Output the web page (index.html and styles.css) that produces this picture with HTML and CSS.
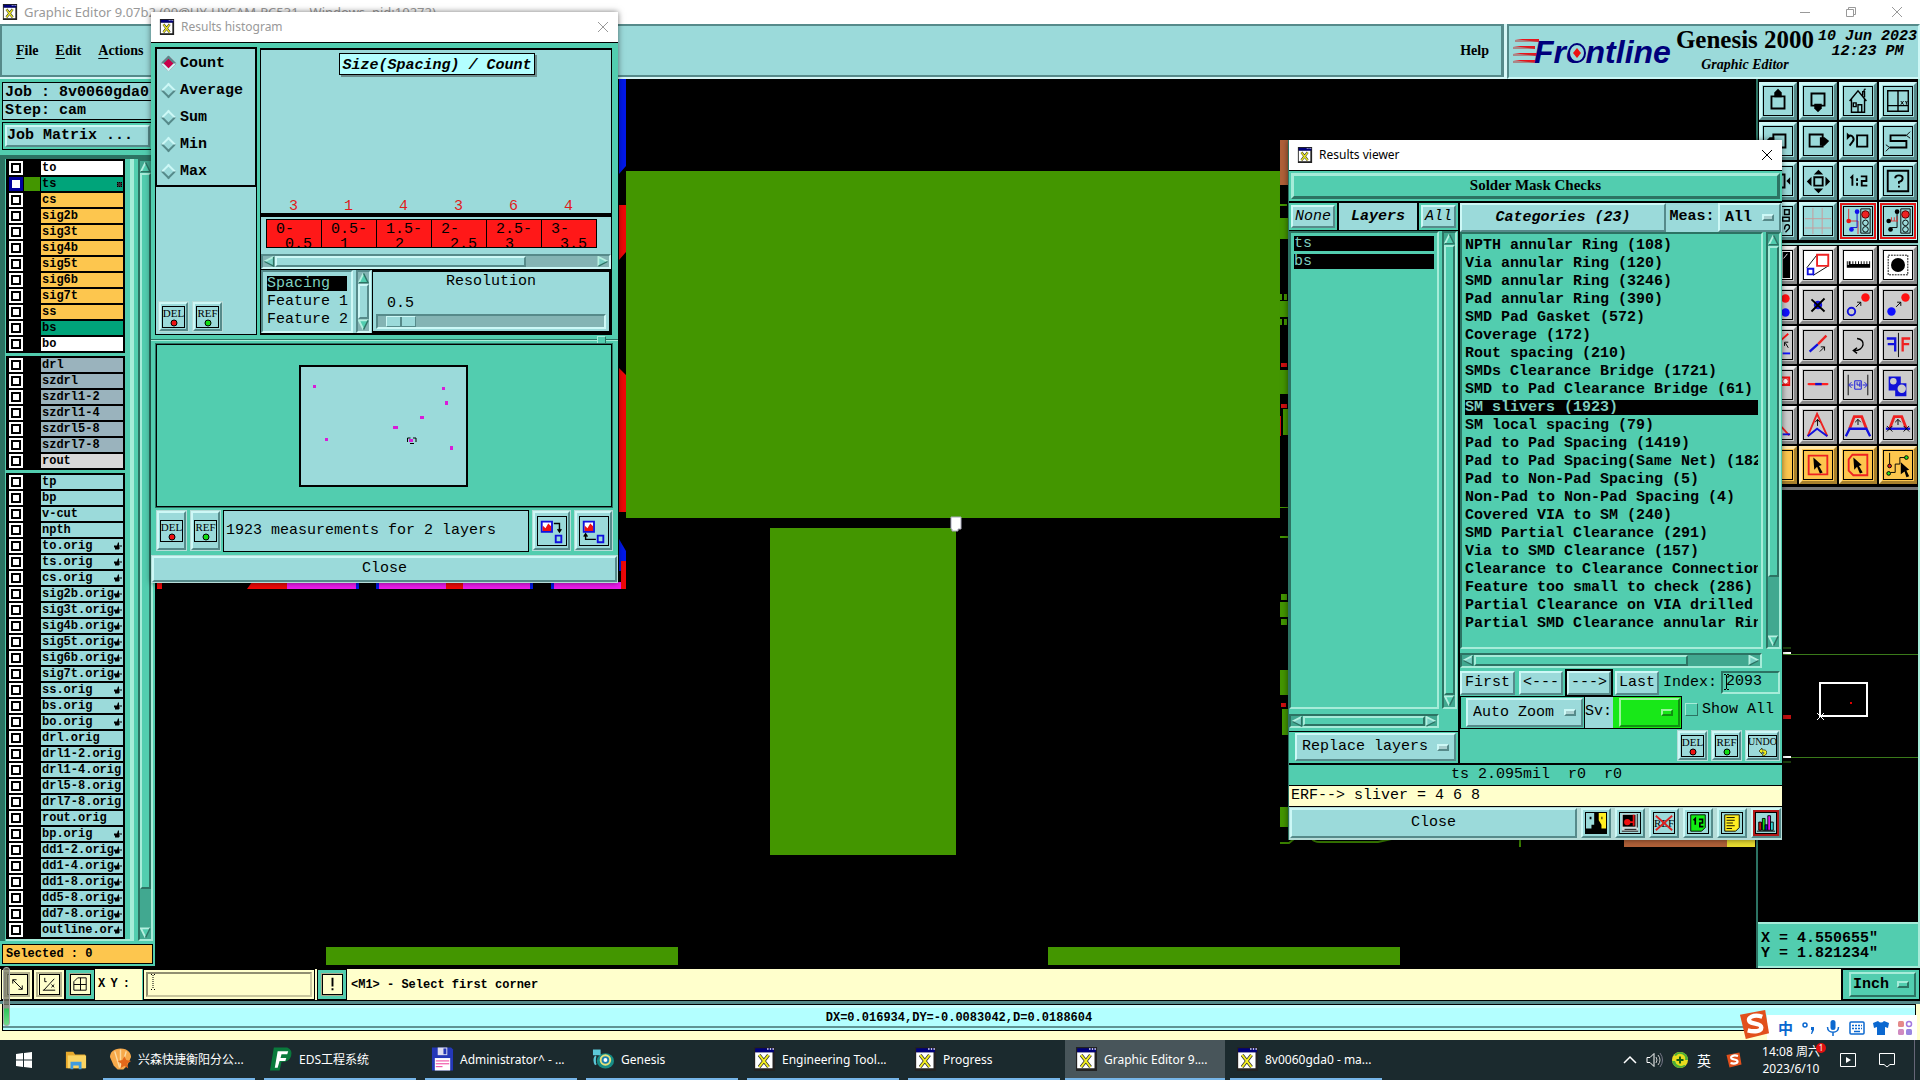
FILE: index.html
```html
<!DOCTYPE html>
<html lang="en">
<head>
<meta charset="utf-8">
<title>Graphic Editor 9.07b2</title>
<link rel="stylesheet" href="styles.css">
</head>
<body>
<svg class="defs" aria-hidden="true">
  <symbol id="xapp" viewBox="0 0 16 18"><path d="M0 0h16v18H0z" fill="#222"/><path d="M1 4h13v12H1z" fill="#fff"/><path d="M1 1h14v3H1z" fill="#00007b"/><path d="M10 1h1v1h-1zM12 1h1v1h-1zM14 1h1v1h-1z" fill="#fff"/><path d="M4 6l7 9M11 6l-7 9" stroke="#333" stroke-width="2.6"/><path d="M4 6l7 9M11 6l-7 9" stroke="#f3ee20" stroke-width="1.5"/></symbol>
  <symbol id="hand" viewBox="0 0 8 8"><path d="M0 3h3l1-3h1v3h3v1H5v1h1v1H5v1H1V5H0z"/></symbol>
  <symbol id="dot-red" viewBox="0 0 8 8"><circle cx="4" cy="4" r="3" fill="#e11" stroke="#000"/></symbol>
  <symbol id="dot-green" viewBox="0 0 8 8"><circle cx="4" cy="4" r="3" fill="#1d1" stroke="#000"/></symbol>
  <symbol id="up" viewBox="0 0 12 12"><path d="M6 1L1 11h10z" fill="#52cdaf"/><path d="M6 1L1 11" stroke="#b5f0e0" stroke-width="2"/><path d="M6 1l5 10H1" fill="none" stroke="#2c7363" stroke-width="1.5"/></symbol>
  <symbol id="down" viewBox="0 0 12 12"><path d="M6 11L1 1h10z" fill="#52cdaf"/><path d="M6 11L1 1h10" fill="none" stroke="#b5f0e0" stroke-width="2"/><path d="M11 1L6 11" stroke="#2c7363" stroke-width="1.5"/></symbol>
  <symbol id="left" viewBox="0 0 12 12"><path d="M1 6l10-5v10z" fill="#79cfc4"/><path d="M1 6l10-5" stroke="#b5f0e0" stroke-width="2"/><path d="M11 1v10L1 6" fill="none" stroke="#2c7363" stroke-width="1.5"/></symbol>
  <symbol id="right" viewBox="0 0 12 12"><path d="M11 6L1 1v10z" fill="#79cfc4"/><path d="M11 6L1 1v10" fill="none" stroke="#b5f0e0" stroke-width="2"/><path d="M11 6L1 11" stroke="#2c7363" stroke-width="1.5"/></symbol>
  <symbol id="sogou" viewBox="0 0 32 32"><path d="M1 6L27 1l4 24L7 31z" fill="#e2501c"/><path d="M24 8C15 5 8 9 11 13c3 3 12 1 12 6 0 4-7 5-14 3" fill="none" stroke="#fff" stroke-width="4.5"/></symbol>
</svg>

<header class="titlebar">
  <svg class="app-icon"><use href="#xapp"/></svg>
  <span>Graphic Editor 9.07b2 (00@HY-HYCAM-PC531 - Windows, pid:10272)</span>
  <div class="win-controls">
    <button aria-label="Minimize"><svg viewBox="0 0 12 12"><path d="M1 6.5h10"/></svg></button>
    <button aria-label="Restore"><svg viewBox="0 0 12 12"><path d="M1.500 3.500h7v7h-7zM3.500 3.500v-2h7v7h-2"/></svg></button>
    <button aria-label="Close window"><svg viewBox="0 0 12 12"><path d="M1 1l10 10M11 1L1 11"/></svg></button>
  </div>
</header>

<div class="top">
  <nav class="menu">
    <button><u>F</u>ile</button><button><u>E</u>dit</button><button><u>A</u>ctions</button><button class="help">Help</button>
  </nav>
  <div class="brand">
    <svg class="logo" viewBox="0 0 164 34"><path d="M2 4h24v3zM0 11h22v3zM0 18h24v3zM0 25h24v3z" fill="#e8141c"/><path d="M2 6h24M0 13h22M0 20h24M0 27h24" stroke="#b33"/><text x="21" y="28">Frontline</text><ellipse cx="64" cy="18" rx="8" ry="9" fill="#9bdada" stroke="#00007b" stroke-width="2"/><path d="M64 13l4 5-4 5-4-5z" fill="#e11"/></svg>
    <div class="product"><b>Genesis 2000</b><i>Graphic Editor</i></div>
    <div class="date"><span>10 Jun 2023</span><span>12:23 PM</span></div>
  </div>
</div>

<main class="work">
  <aside class="side">
    <div class="job">Job : 8v0060gda0</div>
    <div class="job">Step: cam</div>
    <div class="matrix"><button>Job Matrix ...</button></div>
    <div class="layer-area">
      <div class="layers">
        <ul class="white">
          <li><label><input type="checkbox"><i></i><span>to</span></label></li>
          <li class="sel"><label><input type="checkbox"><i></i><span>ts<em></em></span></label></li>
          <li class="sig"><label><input type="checkbox"><i></i><span>cs</span></label></li>
          <li class="sig"><label><input type="checkbox"><i></i><span>sig2b</span></label></li>
          <li class="sig"><label><input type="checkbox"><i></i><span>sig3t</span></label></li>
          <li class="sig"><label><input type="checkbox"><i></i><span>sig4b</span></label></li>
          <li class="sig"><label><input type="checkbox"><i></i><span>sig5t</span></label></li>
          <li class="sig"><label><input type="checkbox"><i></i><span>sig6b</span></label></li>
          <li class="sig"><label><input type="checkbox"><i></i><span>sig7t</span></label></li>
          <li class="sig"><label><input type="checkbox"><i></i><span>ss</span></label></li>
          <li class="mask"><label><input type="checkbox"><i></i><span>bs</span></label></li>
          <li><label><input type="checkbox"><i></i><span>bo</span></label></li>
        </ul>
        <ul class="drill">
          <li><label><input type="checkbox"><i></i><span>drl</span></label></li>
          <li><label><input type="checkbox"><i></i><span>szdrl</span></label></li>
          <li><label><input type="checkbox"><i></i><span>szdrl1-2</span></label></li>
          <li><label><input type="checkbox"><i></i><span>szdrl1-4</span></label></li>
          <li><label><input type="checkbox"><i></i><span>szdrl5-8</span></label></li>
          <li><label><input type="checkbox"><i></i><span>szdrl7-8</span></label></li>
          <li class="rout"><label><input type="checkbox"><i></i><span>rout</span></label></li>
        </ul>
        <ul class="misc">
          <li><label><input type="checkbox"><i></i><span>tp</span></label></li>
          <li><label><input type="checkbox"><i></i><span>bp</span></label></li>
          <li><label><input type="checkbox"><i></i><span>v-cut</span></label></li>
          <li><label><input type="checkbox"><i></i><span>npth</span></label></li>
          <li><label><input type="checkbox"><i></i><span>to.orig<svg><use href="#hand"/></svg></span></label></li>
          <li><label><input type="checkbox"><i></i><span>ts.orig<svg><use href="#hand"/></svg></span></label></li>
          <li><label><input type="checkbox"><i></i><span>cs.orig<svg><use href="#hand"/></svg></span></label></li>
          <li><label><input type="checkbox"><i></i><span>sig2b.orig<svg><use href="#hand"/></svg></span></label></li>
          <li><label><input type="checkbox"><i></i><span>sig3t.orig<svg><use href="#hand"/></svg></span></label></li>
          <li><label><input type="checkbox"><i></i><span>sig4b.orig<svg><use href="#hand"/></svg></span></label></li>
          <li><label><input type="checkbox"><i></i><span>sig5t.orig<svg><use href="#hand"/></svg></span></label></li>
          <li><label><input type="checkbox"><i></i><span>sig6b.orig<svg><use href="#hand"/></svg></span></label></li>
          <li><label><input type="checkbox"><i></i><span>sig7t.orig<svg><use href="#hand"/></svg></span></label></li>
          <li><label><input type="checkbox"><i></i><span>ss.orig<svg><use href="#hand"/></svg></span></label></li>
          <li><label><input type="checkbox"><i></i><span>bs.orig<svg><use href="#hand"/></svg></span></label></li>
          <li><label><input type="checkbox"><i></i><span>bo.orig<svg><use href="#hand"/></svg></span></label></li>
          <li><label><input type="checkbox"><i></i><span>drl.orig</span></label></li>
          <li><label><input type="checkbox"><i></i><span>drl1-2.orig</span></label></li>
          <li><label><input type="checkbox"><i></i><span>drl1-4.orig</span></label></li>
          <li><label><input type="checkbox"><i></i><span>drl5-8.orig</span></label></li>
          <li><label><input type="checkbox"><i></i><span>drl7-8.orig</span></label></li>
          <li><label><input type="checkbox"><i></i><span>rout.orig</span></label></li>
          <li><label><input type="checkbox"><i></i><span>bp.orig<svg><use href="#hand"/></svg></span></label></li>
          <li><label><input type="checkbox"><i></i><span>dd1-2.orig<svg><use href="#hand"/></svg></span></label></li>
          <li><label><input type="checkbox"><i></i><span>dd1-4.orig<svg><use href="#hand"/></svg></span></label></li>
          <li><label><input type="checkbox"><i></i><span>dd1-8.orig<svg><use href="#hand"/></svg></span></label></li>
          <li><label><input type="checkbox"><i></i><span>dd5-8.orig<svg><use href="#hand"/></svg></span></label></li>
          <li><label><input type="checkbox"><i></i><span>dd7-8.orig<svg><use href="#hand"/></svg></span></label></li>
          <li><label><input type="checkbox"><i></i><span>outline.or<svg><use href="#hand"/></svg></span></label></li>
        </ul>
      </div>
      <div class="vscroll"><svg><use href="#up"/></svg><div class="track"><div class="thumb" style="height:95%"></div></div><svg><use href="#down"/></svg></div>
    </div>
    <div class="selected">Selected : 0</div>
  </aside>

  <svg class="board" viewBox="155 79 1601 889" preserveAspectRatio="xMinYMin slice">
    <g fill="#439600">
      <path d="M626 171h654v347H626zM770 528h186v327H770zM326 947h352v18H326zM1048 947h352v18h-352z"/>
      <path d="M1280 204h7v2h-7zM1280 218h8v21h-8zM1280 294h2v6h-2zM1284 294h3v6h-3zM1280 301h8v16h-8zM1280 319h2v6h-2zM1284 319h3v6h-3zM1280 370h8v24h-8zM1283 409h5v26h-5zM1280 507h8v1h-8zM1280 536h8v2h-8zM1281 594h6v6h-6zM1280 602h8v15h-8zM1281 619h6v6h-6zM1280 670h8v25h-8zM1282 709h6v26h-6zM1280 807h8v20h-8z"/>
    </g>
    <path d="M1280 843h9l5-4M1312 839q2 3 8 3h58l18-4M1520 838v9" fill="none" stroke="#3a8000" stroke-width="2"/>
    <path d="M1281 363h6v4h-6zM1281 404h6v4h-6zM1280 416h1v20h-1zM1281 703h5v4h-5z" fill="#d01010"/>
    <path d="M1280 140h8v45h-8zM1624 839h103v8h-103z" fill="#b06038"/><path d="M1727 839h28v8h-28z" fill="#e8dc30"/>
    <path d="M619 79h7v87l-7 8zM619 539l7 12v20h-7zM446 582h6v7h-6zM530 582h3v7h-3zM551 582h3v7h-3zM376 582h3v7h-3zM356 582h3v7h-3z" fill="#0018e8"/>
    <path d="M619 205h7v47l-7 8zM619 368l7 7v137h-7zM157 582h5v7h-5zM252 582h35v7h-40zM446 582h17v7h-17zM621 561h5v28h-5z" fill="#f00808"/>
    <path d="M287 582h69v7h-69zM379 582h67v7h-67zM463 582h67v7h-67zM554 582h67v7h-67z" fill="#ee1cee"/>
    <path d="M951 517h10v12h-3v2h-6v-2h-1z" fill="#fff" stroke="#aab"/>
  </svg>

  <aside class="tools">
    <div class="grid">
      <button aria-label="Pan up"><svg viewBox="0 0 30 30"><path d="M8 10h14v13H8z" fill="none" stroke="#000" stroke-width="2"/><path d="M15 2l4 4v5h-8V6z"/></svg></button>
      <button aria-label="Pan down"><svg viewBox="0 0 30 30"><path d="M8 7h14v13H8z" fill="none" stroke="#000" stroke-width="2"/><path d="M11 18h8v5l-4 4-4-4z"/></svg></button>
      <button aria-label="Home"><svg viewBox="0 0 30 30"><path d="M6 15L15 4l9 11M8 13v14h14V13M15 27v-8h4v8M10 17h3v4h-3zM20 9V5h2v6M21 4l2-2" fill="none" stroke="#000" stroke-width="1.500"/></svg></button>
      <button aria-label="Panes"><svg viewBox="0 0 30 30"><path d="M4 4h22v22H4zM15 4v22M4 20h22" fill="none" stroke="#000" stroke-width="1.500"/><path d="M18 15l3 4M21 15l-3 4M23 15l1 2 1-2M24 17v2" fill="none" stroke="#000"/></svg></button>
      <button aria-label="Pan left"><svg viewBox="0 0 30 30"><path d="M10 8h13v14H10z" fill="none" stroke="#000" stroke-width="2"/><path d="M2 15l4-4h5v8H6z"/></svg></button>
      <button aria-label="Pan right"><svg viewBox="0 0 30 30"><path d="M6 8h14v13H6z" fill="none" stroke="#000" stroke-width="2"/><path d="M17 11h5l5 4-5 5h-5z"/></svg></button>
      <button aria-label="Previous view"><svg viewBox="0 0 30 30"><path d="M14 9h11v12H14z" fill="none" stroke="#000" stroke-width="2"/><path d="M4 10c5-3 8 3 5 6l-3 4" fill="none" stroke="#000" stroke-width="2"/><path d="M3 6v8l4-4z"/></svg></button>
      <button aria-label="Serpentine"><svg viewBox="0 0 30 30"><path d="M24 9H7v6h17v7H6" fill="none" stroke="#000" stroke-width="2"/><path d="M28 5l-4 4 4 3M2 19l4 3-4 4" fill="none" stroke="#000"/></svg></button>
      <button aria-label="Zoom in"><svg viewBox="0 0 30 30"><path d="M18 8h4v14h-4" fill="none" stroke="#000" stroke-width="2"/><path d="M24 15l4-4v8z"/></svg></button>
      <button aria-label="Zoom out"><svg viewBox="0 0 30 30"><path d="M11 11h9v9h-9z" fill="none" stroke="#000" stroke-width="2"/><path d="M15.500 3l5 5h-10zM15.500 28l5-5h-10zM3 15.500l5-5v10zM28 15.500l-5-5v10z"/></svg></button>
      <button aria-label="Scale"><svg viewBox="0 0 30 30"><path d="M7 12l2-2v10M14 12v3M14 17v3M18 10h6v5h-5v5h6" fill="none" stroke="#000" stroke-width="2"/></svg></button>
      <button aria-label="Query"><svg viewBox="0 0 30 30"><path d="M4 4h22v22H4z" fill="none" stroke="#000" stroke-width="2"/><path d="M12 12q0-3 4-3t4 3q0 3-4 4v2M16 20v2" fill="none" stroke="#000" stroke-width="2"/></svg></button>
      <button aria-label="Options"><svg viewBox="0 0 30 30"><path d="M22 3h5v5h-5zM20 11h7v4h-7zM22 24q0-5 3-5t2 4l-4 4" fill="none" stroke="#000" stroke-width="1.500"/></svg></button>
      <button aria-label="Grid"><svg viewBox="0 0 30 30"><path d="M9.500 1v28M19.500 1v28M1 12.500h28M1 22.500h28" stroke="#c89a9a"/></svg></button>
      <button class="hot" aria-label="Selection on"><svg viewBox="0 0 30 30"><path d="M5 2v13h10v14" fill="none" stroke="#d33"/><path d="M14 5v17H8" fill="none" stroke="#11c"/><g fill="#11e"><circle cx="14" cy="5" r="2.500"/><circle cx="8" cy="24" r="2.500"/></g><circle cx="5" cy="15" r="2.500" fill="#e11"/><path d="M18 2h10v26H18z" fill="none" stroke="#000"/><circle cx="23" cy="8" r="4" fill="#e22" stroke="#500"/><circle cx="23" cy="17" r="3" fill="none" stroke="#000"/><circle cx="23" cy="24" r="3" fill="none" stroke="#000"/></svg></button>
      <button class="hot" aria-label="Selection off"><svg viewBox="0 0 30 30"><path d="M14 5v17H8" fill="none" stroke="#000"/><path d="M5 15h10M8 11v4M11 11v4M14 10v5" stroke="#d33" fill="none"/><circle cx="14" cy="5" r="2.500"/><circle cx="7" cy="24" r="2.500"/><circle cx="5" cy="15" r="2.500"/><path d="M18 2h10v26H18z" fill="none" stroke="#000"/><circle cx="23" cy="8" r="4" fill="#e22" stroke="#500"/><circle cx="23" cy="17" r="3" fill="none" stroke="#000"/><circle cx="23" cy="24" r="3" fill="none" stroke="#000"/></svg></button>
    </div>
    <div class="grid edit">
      <button class="w" aria-label="Fill"><svg viewBox="0 0 30 30"><path d="M20 1h8v28h-8z"/><path d="M21 8l4-5" stroke="#fff"/></svg></button>
      <button class="w" aria-label="Resize"><svg viewBox="0 0 30 30"><path d="M3 18L14 4M10 26l16-10" stroke="#000"/><path d="M14 4h12v12H14z" fill="none" stroke="#e22" stroke-width="2"/><path d="M4 19h6v6H4z" fill="none" stroke="#11d" stroke-width="2"/></svg></button>
      <button class="w" aria-label="Measure"><svg viewBox="0 0 30 30"><path d="M3 18v-7h1v4h1v-4h2v3h2v-3h1v3h2v-3h1v3h2v-3h1v3h2v-3h1v3h2v-3h1v3h2v-3h1v3h2v-3h1v7z"/></svg></button>
      <button class="w" aria-label="Aperture"><svg viewBox="0 0 30 30"><circle cx="15" cy="15" r="7.500"/><path d="M4.500 4.500h21v21h-21z" fill="none" stroke="#000" stroke-dasharray="2 1"/></svg></button>
      <button aria-label="Copy"><svg viewBox="0 0 30 30"><circle cx="23" cy="8" r="4.500" fill="#f11"/><circle cx="23" cy="23" r="4.500" fill="#11f"/></svg></button>
      <button aria-label="Delete"><svg viewBox="0 0 30 30"><circle cx="15" cy="15" r="4.500" fill="#11d"/><path d="M8 9l14 13M22 8L8 22" stroke="#000" stroke-width="2"/></svg></button>
      <button aria-label="Move"><svg viewBox="0 0 30 30"><circle cx="23" cy="7" r="4.500" fill="#f11"/><circle cx="8" cy="22" r="4" fill="none" stroke="#11d" stroke-width="2"/><path d="M13 17l5-5M14 12h4v4" fill="none" stroke="#000"/></svg></button>
      <button aria-label="Duplicate"><svg viewBox="0 0 30 30"><circle cx="23" cy="7" r="4.500" fill="#f11"/><circle cx="8" cy="22" r="4.500" fill="#11f"/><path d="M13 17l5-5M14 12h4v4" fill="none" stroke="#000"/></svg></button>
      <button aria-label="Rotate"><svg viewBox="0 0 30 30"><path d="M18 10l8-7" stroke="#f11" stroke-width="2"/><path d="M20 24h8" stroke="#11f" stroke-width="2"/><path d="M26 18l-3-5M22 16v-4h4" fill="none" stroke="#000"/></svg></button>
      <button aria-label="Stretch"><svg viewBox="0 0 30 30"><path d="M6 22l9-8" stroke="#11d" stroke-width="2.500"/><path d="M15 14l9-9" stroke="#e22" stroke-width="2.500"/><path d="M17 22l5-5M18 17h4v4" fill="none" stroke="#000"/></svg></button>
      <button aria-label="Turn"><svg viewBox="0 0 30 30"><path d="M14 8c10 1 8 13-3 13M14 18l-4 3 4 3" fill="none" stroke="#000" stroke-width="1.500"/></svg></button>
      <button aria-label="Mirror"><svg viewBox="0 0 30 30"><path d="M15.500 2v26" stroke="#000"/><path d="M3 8h9v14M4 14h8" fill="none" stroke="#11d" stroke-width="2.500"/><path d="M28 8h-8v14M27 14h-7" fill="none" stroke="#e22" stroke-width="2.500"/></svg></button>
      <button aria-label="Frame"><svg viewBox="0 0 30 30"><path d="M14 7h13v8H14z" fill="none" stroke="#e11" stroke-width="2"/><circle cx="23" cy="11" r="3" fill="#fff" stroke="#e11"/></svg></button>
      <button aria-label="Break"><svg viewBox="0 0 30 30"><path d="M5 14h20" stroke="#f22" stroke-width="2.500" stroke-linecap="round"/><path d="M12 14h7" stroke="#11c" stroke-width="2.500"/></svg></button>
      <button aria-label="Spacing"><svg viewBox="0 0 30 30"><path d="M4.500 4v22M25.500 4v22" stroke="#000"/><path d="M6 15h4M20 15h4M8 12l-3 3 3 3M22 12l3 3-3 3M11.500 10.500h7v9h-7zM14 12v3h3M17 12v5" fill="none" stroke="#11d"/></svg></button>
      <button aria-label="Shapes"><svg viewBox="0 0 30 30"><path d="M5 6h13v7h6v14H12v-6H5z" fill="#1111d8"/><circle cx="10" cy="11" r="3.500" fill="#ccc"/><circle cx="19" cy="19" r="4.500" fill="#ccc"/></svg></button>
      <button aria-label="Corner"><svg viewBox="0 0 30 30"><path d="M16 14l11 12" stroke="#e22" stroke-width="2"/><path d="M20 25h8" stroke="#11d" stroke-width="2"/></svg></button>
      <button aria-label="Sharp corner"><svg viewBox="0 0 30 30"><path d="M4 27L14 3l11 24" fill="none" stroke="#e22" stroke-width="2"/><path d="M4 27l10-8 11 8" fill="none" stroke="#11d" stroke-width="2"/><path d="M14.500 16V9M12 12l2.500-3 2.500 3" fill="none" stroke="#000"/></svg></button>
      <button aria-label="Bevel corner"><svg viewBox="0 0 30 30"><path d="M6 19l5-13h8l5 13" fill="none" stroke="#e22" stroke-width="3"/><path d="M2 27l4-8h18l4 8" fill="none" stroke="#11d" stroke-width="2.500"/><path d="M15 15V9M12 12l3-3 3 3" fill="none" stroke="#000"/></svg></button>
      <button aria-label="Flatten"><svg viewBox="0 0 30 30"><path d="M6 19l5-13h8l5 13" fill="none" stroke="#e22" stroke-width="3"/><path d="M2 19h26" stroke="#11d" stroke-width="2.500"/><path d="M15 15V9M12 12l3-3 3 3M3 16l6 6M9 16l-6 6M21 16l6 6M27 16l-6 6" fill="none" stroke="#000"/></svg></button>
      <button class="o" aria-label="Select"><svg viewBox="0 0 30 30"></svg></button>
      <button class="o" aria-label="Select frame"><svg viewBox="0 0 30 30"><path d="M5 5h20v20H5z" fill="none" stroke="#e22" stroke-width="2"/><path d="M10 7l9 8-3 1 4 7-3 1-3-7-3 3z"/></svg></button>
      <button class="o" aria-label="Select polygon"><svg viewBox="0 0 30 30"><path d="M9 4h16v22H10l-5-5V9z" fill="none" stroke="#e22" stroke-width="2"/><path d="M10 7l9 8-3 1 4 7-3 1-3-7-3 3z"/></svg></button>
      <button class="o" aria-label="Select net"><svg viewBox="0 0 30 30"><path d="M6 2v14M7 23h5v-9h5V7h8" fill="none" stroke="#000"/><circle cx="6" cy="16" r="2" fill="#d22" stroke="#000"/><circle cx="5" cy="24" r="2" fill="#2d2" stroke="#000"/><circle cx="24" cy="7" r="2" fill="#2d2" stroke="#000"/><path d="M18 12l9 8-3 1 3 6-3 1-2-6-4 3z"/></svg></button>
    </div>
    <div class="overview">
      <svg viewBox="1758 489 160 432" preserveAspectRatio="xMinYMin slice"><path d="M1783 653.500h135M1783 756.500h135M1783 647h8M1783 761h8" stroke="#3a7a1a"/><path d="M1783 652h8M1783 756h8" stroke="#fff" stroke-width="2"/><path d="M1783 714h8v4h-8z" fill="#c01010"/><path d="M1820 682h47v33h-47z" fill="none" stroke="#fff" stroke-width="2"/><path d="M1817 712l7 7M1824 712l-7 7" stroke="#fff"/><path d="M1850 701h2v2h-2z" fill="#d00"/></svg>
    </div>
    <div class="coords"><span>X = 4.550655"</span><span>Y = 1.821234"</span></div>
  </aside>
</main>

<div class="msgbar">
  <button class="mb" aria-label="Drag"><svg viewBox="0 0 20 20"><path d="M5 5l10 10M5 9V5h4M15 11v4h-4" fill="none" stroke="#000"/></svg></button>
  <button class="mb" aria-label="Angle"><svg viewBox="0 0 20 20"><path d="M3 16h13M4 16L15 4M5 3v4h2M12 10l3 3M15 10l-3 3" fill="none" stroke="#000"/></svg></button>
  <button class="mb teal" aria-label="Snap"><svg viewBox="0 0 20 20"><path d="M3 7l4-4h9v13H3zM10 3v13M3 10h13" fill="none" stroke="#000"/></svg></button>
  <label for="xy"><span>X</span><span>Y</span><span>:</span></label>
  <div class="xy"><input id="xy" type="text"><svg viewBox="0 0 4 16"><path d="M0 .5h1M3 .5h1M2 1v14M0 15.500h1M3 15.500h1" stroke="#000" stroke-dasharray="1 1"/></svg></div>
  <button class="mb teal" aria-label="Alert"><svg viewBox="0 0 20 20"><path d="M9 3h2v9H9zM9 14h2v2H9z"/></svg></button>
  <p>&lt;M1&gt; - Select first corner</p>
  <div class="unit"><label class="opt green-opt"><select aria-label="Units"><option>Inch</option></select><i></i></label></div>
</div>
<div class="status"><div>DX=0.016934,DY=-0.0083042,D=0.0188604</div></div>

<footer class="taskbar">
  <button class="start" aria-label="Start"><svg viewBox="0 0 16 16"><path d="M0 2l7-1v6.500H0zM8 1l8-1v7.500H8zM0 8.500h7V15l-7-1zM8 8.500h8V16l-8-1z" fill="#fff"/></svg></button>
  <button class="start" aria-label="File Explorer"><svg viewBox="0 0 24 20"><path d="M1 1h8l2 3h11v15H1z" fill="#e8a92c"/><path d="M3 5h20v14H3z" fill="#fcd462"/><path d="M6 20v-8h12v8h-3v-4H9v4z" fill="#3f9be0"/></svg></button>
  <div class="tasks">
    <button><svg viewBox="0 0 24 24"><path d="M12 1c8 0 11 5 11 9l-4 9-4 4H9l-4-4-4-9c0-5 4-9 11-9z" fill="#f6a94a"/><path d="M12 2v19M6 4l5 17M18 4l-5 17" stroke="#fbd9a0" stroke-width="1.500"/><path d="M16 9l2 4 5 1-4 3 1 5-4-3-4 3 1-5-4-3 5-1z" fill="#e3681b"/></svg><span>兴森快捷衡阳分公...</span></button>
    <button><svg viewBox="0 0 24 24"><path d="M4 0h14q6 3 4 9-2 6-10 6l-2 9H0z" fill="#0a7a3c"/><path d="M8 4h11l-1 3h-6l-1 4h6l-1 3h-6l-2 7H5z" fill="#fff"/></svg><span>EDS工程系统</span></button>
    <button><svg viewBox="0 0 24 24"><path d="M1 0h20l2 2v22H1z" fill="#2438b8"/><path d="M7 0h10v8H7z" fill="#dde"/><path d="M13 1h3v6h-3z" fill="#2438b8"/><path d="M4 11h16v13H4z" fill="#fff"/><path d="M5 14h14M5 17h14M5 20h7" stroke="#e39"/></svg><span>Administrator^ - ...</span></button>
    <button><svg viewBox="0 0 24 24"><ellipse cx="14" cy="14" rx="9" ry="8" fill="#178c86"/><circle cx="14" cy="13" r="6" fill="#e6e07a"/><circle cx="14" cy="13" r="4" fill="#1b7fb0"/><circle cx="14" cy="13" r="2" fill="#fff"/><path d="M2 3h6v4H2zM4 9q-3 4 0 9" fill="#5cc8d8" stroke="#5cc8d8" stroke-width="2"/></svg><span>Genesis</span></button>
    <button><svg viewBox="0 0 16 18"><use href="#xapp"/></svg><span>Engineering Tool...</span></button>
    <button><svg viewBox="0 0 16 18"><use href="#xapp"/></svg><span>Progress</span></button>
    <button class="active"><svg viewBox="0 0 16 18"><use href="#xapp"/></svg><span>Graphic Editor 9....</span></button>
    <button><svg viewBox="0 0 16 18"><use href="#xapp"/></svg><span>8v0060gda0 - ma...</span></button>
  </div>
  <div class="tray">
    <svg width="14" height="16" viewBox="0 0 14 16"><path d="M1 11l6-6 6 6" fill="none" stroke="#fff" stroke-width="1.500"/></svg>
    <svg width="17" height="16" viewBox="0 0 17 16"><path d="M1 5.500h3l4-4v13l-4-4H1z" fill="none" stroke="#fff"/><path d="M10 5q2 3 0 6M12 3q4 5 0 10" fill="none" stroke="#ccc"/><path d="M14 1q5 7 0 14" fill="none" stroke="#778"/></svg>
    <svg width="16" height="16" viewBox="0 0 16 16"><circle cx="8" cy="8" r="8" fill="#e9dc1e"/><path d="M8 0a8 8 0 0 1 8 8l-3 0a5 5 0 0 0-9-4L2 3a8 8 0 0 1 6-3zM8 16a8 8 0 0 1-8-7h3a6 6 0 0 0 9 4l2 0a8 8 0 0 1-6 3z" fill="#4cb038"/><path d="M8 4.500v7M4.500 8h7" stroke="#135c13" stroke-width="2"/></svg>
    <span class="lang">英</span>
    <svg width="16" height="16"><use href="#sogou"/></svg>
    <div class="clock"><span>14:08 周六<sup>1</sup></span><span>2023/6/10</span></div>
    <svg width="16" height="16" viewBox="0 0 16 16"><path d="M.5 1.500h15v13H.5z" fill="none" stroke="#fff"/><path d="M6 5l5 3-5 3z" fill="#fff"/></svg>
    <svg class="note" width="16" height="16" viewBox="0 0 16 16"><path d="M.5 1.500h15v11H11L8 15l-3-2.500H.5z" fill="none" stroke="#fff"/></svg>
  </div>
</footer>

<section class="dialog hist" aria-label="Results histogram">
  <div class="dlg-title dim"><svg class="app-icon"><use href="#xapp"/></svg><h2>Results histogram</h2><button aria-label="Close dialog"><svg viewBox="0 0 12 12"><path d="M1 1l10 10M11 1L1 11"/></svg></button></div>
  <div class="hist-top">
    <div class="modes">
      <fieldset>
        <label><input type="radio" name="mode" checked>Count</label>
        <label><input type="radio" name="mode">Average</label>
        <label><input type="radio" name="mode">Sum</label>
        <label><input type="radio" name="mode">Min</label>
        <label><input type="radio" name="mode">Max</label>
      </fieldset>
      <div class="pair"><button class="ib"><span>DEL<svg><use href="#dot-red"/></svg></span></button><button class="ib"><span>REF<svg><use href="#dot-green"/></svg></span></button></div>
    </div>
    <div class="plot">
      <div class="plot-title"><h3>Size(Spacing) / Count</h3></div>
      <div class="counts"><span>3</span><span>1</span><span>4</span><span>3</span><span>6</span><span>4</span></div>
      <div class="bars"><div>0-<span>0.5</span></div><div>0.5-<span>1</span></div><div>1.5-<span>2</span></div><div>2-<span>2.5</span></div><div>2.5-<span>3</span></div><div>3-<span>3.5</span></div></div>
      <div class="hscroll cy"><svg><use href="#left"/></svg><div class="track"><div class="thumb" style="width:78%"></div></div><svg><use href="#right"/></svg></div>
      <div class="plot-foot">
        <ul><li class="on">Spacing</li><li>Feature 1</li><li>Feature 2</li></ul>
        <div class="vscroll cy"><svg><use href="#up"/></svg><div class="track"><div class="thumb" style="height:100%"></div></div><svg><use href="#down"/></svg></div>
        <div class="res"><label for="res">Resolution</label><output>0.5</output><input id="res" type="range" min="0" max="12" value="0.5" step="0.5"></div>
      </div>
    </div>
  </div>
  <div class="sash"><i></i></div>
  <div class="map"><svg viewBox="0 0 170 122"><path d="M1 1h167v120H1z" fill="#9bdada" stroke="#000" stroke-width="2"/><path d="M14 20h3v3h-3zM143 22h3v3h-3zM146 36h3v4h-3zM121 51h4v3h-4zM94 61h5v3h-5zM26 73h3v3h-3zM110 74h4v3h-4zM151 81h3v4h-3z" fill="#d81cd8"/><path d="M108.500 77v-4h3M114 73h3v4M111 78.500h4" fill="none" stroke="#000"/></svg></div>
  <div class="hist-foot">
    <button class="ib"><span>DEL<svg><use href="#dot-red"/></svg></span></button>
    <button class="ib"><span>REF<svg><use href="#dot-green"/></svg></span></button>
    <p>1923 measurements for 2 layers</p>
    <button class="pic" aria-label="Send to map"><svg viewBox="0 0 30 30"><path d="M4 5h11v11H4z" fill="#fff" stroke="#11d" stroke-width="2"/><path d="M5 15V9l3 3 3-5 3 3v5z" fill="#e11"/><path d="M17 7h6v9M21 13l2 3 2-3" fill="none" stroke="#000" stroke-width="1.500"/><path d="M19 20h6v7h-6z" fill="none" stroke="#11d" stroke-width="2"/></svg></button>
    <button class="pic" aria-label="Bring from map"><svg viewBox="0 0 30 30"><path d="M4 5h11v11H4z" fill="#fff" stroke="#11d" stroke-width="2"/><path d="M5 15V9l3 3 3-5 3 3v5z" fill="#e11"/><path d="M17 24H6v-5M4 21l2-3 2 3" fill="none" stroke="#000" stroke-width="1.500"/><path d="M19 20h6v7h-6z" fill="none" stroke="#11d" stroke-width="2"/></svg></button>
  </div>
  <button class="close">Close</button>
</section>

<section class="dialog view" aria-label="Results viewer">
  <div class="dlg-title"><svg class="app-icon"><use href="#xapp"/></svg><h2>Results viewer</h2><button aria-label="Close dialog"><svg viewBox="0 0 12 12"><path d="M1 1l10 10M11 1L1 11"/></svg></button></div>
  <h3 class="check">Solder Mask Checks</h3>
  <div class="cols">
    <div class="lcol">
      <div class="lhead"><div><button>None</button></div><b>Layers</b><div><button>All</button></div></div>
      <div class="lists">
        <ul class="ll"><li class="on">ts</li><li class="on">bs</li></ul>
        <div class="vscroll"><svg><use href="#up"/></svg><div class="track"><div class="thumb" style="height:100%"></div></div><svg><use href="#down"/></svg></div>
      </div>
      <div class="hscroll"><svg><use href="#left"/></svg><div class="track"><div class="thumb" style="width:100%"></div></div><svg><use href="#right"/></svg></div>
      <div class="replace"><label class="opt"><select aria-label="Layer action"><option>Replace layers</option></select><i></i></label></div>
    </div>
    <div class="rcol">
      <div class="rhead"><button>Categories (23)</button><label for="meas">Meas:</label><div class="opt"><select id="meas"><option>All</option></select><i></i></div></div>
      <div class="lists">
        <ul class="cats">
          <li>NPTH annular Ring (108)</li><li>Via annular Ring (120)</li><li>SMD annular Ring (3246)</li><li>Pad annular Ring (390)</li><li>SMD Pad Gasket (572)</li><li>Coverage (172)</li><li>Rout spacing (210)</li><li>SMDs Clearance Bridge (1721)</li><li>SMD to Pad Clearance Bridge (61)</li><li class="on">SM slivers (1923)</li><li>SM local spacing (79)</li><li>Pad to Pad Spacing (1419)</li><li>Pad to Pad Spacing(Same Net) (182)</li><li>Pad to Non-Pad Spacing (5)</li><li>Non-Pad to Non-Pad Spacing (4)</li><li>Covered VIA to SM (240)</li><li>SMD Partial Clearance (291)</li><li>Via to SMD Clearance (157)</li><li>Clearance to Clearance Connection</li><li>Feature too small to check (286)</li><li>Partial Clearance on VIA drilled</li><li>Partial SMD Clearance annular Ring</li>
        </ul>
        <div class="vscroll"><svg><use href="#up"/></svg><div class="track"><div class="thumb" style="height:85%"></div></div><svg><use href="#down"/></svg></div>
      </div>
      <div class="hscroll"><svg><use href="#left"/></svg><div class="track"><div class="thumb" style="width:78%"></div></div><svg><use href="#right"/></svg></div>
      <div class="nav"><button>First</button><button>&lt;---</button><button class="def">---&gt;</button><button>Last</button><label for="idx">Index:</label><div class="idx"><input id="idx" type="text" value="2093"><svg viewBox="0 0 5 16"><path d="M0 .5h2M3 .5h2M2.500 1v14M0 15.500h2M3 15.500h2" stroke="#000"/></svg></div></div>
      <div class="zoomrow"><div class="boxed"><label class="opt"><select aria-label="Zoom mode"><option>Auto Zoom</option></select><i></i></label></div><div class="boxed sv"><label for="sv">Sv:</label><div class="opt lime"><select id="sv"><option></option></select><i></i></div></div><label class="showall"><input type="checkbox">Show All</label></div>
      <div class="acts"><button class="ib"><span>DEL<svg><use href="#dot-red"/></svg></span></button><button class="ib"><span>REF<svg><use href="#dot-green"/></svg></span></button><button class="ib undo"><span>UNDO<svg viewBox="0 0 8 8"><path d="M0 3l3-3v2c6-1 6 4 2 6l-2-1c2-1 3-3 0-3v2z" fill="#ee2" stroke="#000" stroke-width=".6"/></svg></span></button></div>
    </div>
  </div>
  <p class="info">ts 2.095mil&nbsp; r0&nbsp; r0</p>
  <p class="erf">ERF--&gt; sliver = 4 6 8</p>
  <div class="vfoot">
    <button class="close">Close</button>
    <button class="pic" aria-label="Compare"><svg viewBox="0 0 22 22"><path d="M11 0h11v22H11z" fill="#fe2"/><path d="M9 0h5v8l3 5v4h5v5H0v-5h6v-4h3z"/><path d="M4 4h2v3H4zM17 4h1v3h-1z"/></svg></button>
    <button class="pic" aria-label="Capture"><svg viewBox="0 0 22 22"><path d="M2 1h18v20H2z" fill="#cdd"/><path d="M3 2h14v13H3z"/><circle cx="8" cy="10" r="3.500" fill="#e11"/><path d="M14 2h2v12h-2zM10 9h5v2h-5z" fill="#e11"/><path d="M19 1v15M5 18h13M2 20h18" stroke="#000" fill="none"/></svg></button>
    <button class="pic ref" aria-label="No reference"><span>REF</span><svg viewBox="0 0 22 22"><path d="M2 3l18 16M20 3L2 19" stroke="#d22" stroke-width="2"/></svg></button>
    <button class="pic" aria-label="Numbering"><svg viewBox="0 0 22 22"><path d="M3 2h16v14l-4 4H3z" fill="#1e1" stroke="#000"/><path d="M6 8l2-2v7M12 7h4v4h-3v4h4" fill="none" stroke="#000" stroke-width="1.800"/></svg></button>
    <button class="pic" aria-label="Report"><svg viewBox="0 0 22 22"><path d="M3 2h16v14l-4 4H3z" fill="#fe2" stroke="#000"/><path d="M5 5h9M5 8h9M5 11h7M5 14h9M5 17h6" stroke="#000"/></svg></button>
    <button class="pic hot" aria-label="Histogram"><svg viewBox="0 0 22 22"><path d="M3 19v-9h3v9z" fill="#c11" stroke="#000"/><path d="M7 19V6h3v13z" fill="#1d1" stroke="#000"/><path d="M10 19v-6h3v6z" fill="#11c" stroke="#000"/><path d="M13 19V3h3v16z" fill="#e1e" stroke="#000"/><path d="M16 19v-9h3v9z" fill="#3dd" stroke="#000"/><path d="M1 20h20" stroke="#000"/></svg></button>
  </div>
</section>

<div class="ime">
  <svg class="s"><use href="#sogou"/></svg><span>中</span>
  <svg viewBox="0 0 16 16"><circle cx="4" cy="5" r="2" fill="none" stroke="#0b68d0" stroke-width="1.500"/><path d="M10 7h3v3l-2 4h-1l1-4h-1z" fill="#0b68d0"/></svg>
  <svg viewBox="0 0 16 16"><rect x="5.500" y="0" width="5" height="10" rx="2.500" fill="#0b68d0"/><path d="M2.500 7c0 7 11 7 11 0M8 12v4" fill="none" stroke="#0b68d0" stroke-width="1.500"/></svg>
  <svg viewBox="0 0 16 16"><rect x="1" y="2" width="14" height="12" rx="1" fill="none" stroke="#0b68d0" stroke-width="1.500"/><path d="M3 5.500h10M3 8.500h10" stroke="#0b68d0" stroke-width="1.500" stroke-dasharray="2 1"/><path d="M5 11.500h6" stroke="#0b68d0" stroke-width="1.500"/></svg>
  <svg viewBox="0 0 16 16"><path d="M0 3l5-2q3 3 6 0l5 2-1 5-3-1v8H4V7L1 8z" fill="#0b68d0"/></svg>
  <svg viewBox="0 0 16 16"><rect x="1" y="1" width="6" height="6" rx="1.500" fill="#e58a8a"/><circle cx="12" cy="4" r="2.500" fill="none" stroke="#a47ae0" stroke-width="1.500"/><rect x="1" y="9" width="6" height="6" rx="1.500" fill="#d08ac0"/><rect x="9" y="9" width="6" height="6" rx="1.500" fill="#9a86e0"/></svg>
</div>
<div class="marker" aria-hidden="true"></div>
</body>
</html>
```
FILE: styles.css
```css
:root {
  --cy: #9bdada;
  --cy-l: #cdf8f6;
  --cy-d: #568a8a;
  --gr: #52cdaf;
  --gr-l: #a6ecd9;
  --gr-d: #2c7363;
  --cream: #ffffcc;
  --orange: #fdc64e;
  --mono: "Liberation Mono", "Courier New", monospace;
  --serif: "Liberation Serif", "Times New Roman", serif;
  --ui: "Noto Sans", "Noto Sans CJK SC", sans-serif;
}
* { box-sizing: border-box; margin: 0; padding: 0; }
html { height: 100%; }
body { position: relative; min-height: 100vh; display: flex; flex-direction: column; overflow: hidden; background: #000; font: bold 15px/18px var(--mono); color: #000; }
button, input, select { font: inherit; color: inherit; background: none; border: 0; border-radius: 0; appearance: none; }
select { flex: 1; min-width: 0; outline: 0; }
ul { list-style: none; }
svg { display: block; flex: none; }
.defs { position: absolute; width: 0; height: 0; }
.app-icon { width: 16px; height: 16px; }

.titlebar { display: flex; align-items: center; gap: 6px; height: 24px; padding-left: 2px; background: #fff; color: #999; font: 13px/20px var(--ui); }
.win-controls { margin-left: auto; display: flex; }
.win-controls button { width: 46px; height: 20px; display: grid; place-items: center; }
.win-controls svg, .dlg-title button svg { width: 12px; height: 12px; fill: none; stroke: currentColor; }

.top { display: flex; height: 55px; background: #d6f6f6; }
.menu, .brand { background: var(--cy); border: 2px solid; border-color: var(--cy-d) var(--cy-l) var(--cy-l) var(--cy-d); }
.menu { flex: 1; display: flex; align-items: center; gap: 17px; padding: 0 12px 0 14px; border-right: 3px solid var(--cy-d); border-bottom: 2px solid var(--cy-d); margin-bottom: 2px; margin-right: 3px; font: bold 14px/20px var(--serif); }
.menu u { text-underline-offset: 3px; }
.help { margin-left: auto; }
.brand { width: 413px; display: flex; padding-left: 4px; }
.logo { width: 164px; height: 34px; margin-top: 9px; }
.logo text { font: italic bold 32px "Liberation Sans", Arial, sans-serif; fill: #00007b; }
.product { display: flex; flex-direction: column; align-items: center; width: 136px; white-space: nowrap; }
.product b { font: bold 25px/28px var(--serif); }
.product i { font: italic bold 14px/22px var(--serif); }
.date { display: flex; flex-direction: column; align-items: center; padding: 3px 0 0 5px; line-height: 15px; font-style: italic; white-space: nowrap; }

.work { flex: 1; display: flex; min-height: 0; }
.side { width: 155px; display: flex; flex-direction: column; padding: 3px 2px 0; background: var(--gr); border-bottom: 2px solid #000; }
.job { height: 19px; padding: 0 2px; line-height: 19px; border: 1px solid #000; background: var(--cy); }
.job + .job { border-top: 0; }
.matrix { margin: 2px 0 5px; border: 1px solid #000; padding: 2px; }
.matrix button { width: 100%; height: 22px; text-align: left; background: var(--cy); border: 2px solid; border-color: var(--cy-l) var(--cy-d) var(--cy-d) var(--cy-l); }
.layer-area { display: flex; justify-content: space-between; flex: 1; margin-left: -2px; border-left: 5px solid var(--gr-d); border-top: 4px solid var(--gr-d); padding-left: 1px; }
.layers { width: 128px; border-right: 4px solid var(--gr-l); border-bottom: 2px solid var(--gr-l); padding-right: 5px; font-size: 12px; display: flex; flex-direction: column; gap: 3px; }
.layers ul { background: #000; padding: 2px 2px 0 3px; }
.layers li, .layers label { display: flex; }
.layers li { height: 16px; padding-bottom: 2px; flex: 1; }
.layers label { flex: 1; }
.layers input { width: 14px; height: 14px; border: 2px solid #fff; background: #fff; outline: 2px solid #000; outline-offset: -4px; }
.layers i { width: 18px; }
.layers span { flex: 1; display: flex; align-items: center; justify-content: space-between; padding: 0 1px; line-height: 14px; height: 14px; white-space: nowrap; background: #fff; overflow: hidden; }
.layers span svg { width: 8px; height: 9px; margin-left: -2px; }
.layers .sig span { background: var(--orange); }
.layers .sel span, .layers .mask span { background: #00a47a; }
.layers .sel i { background: #439600; width: 16px; margin: 0 1px; }
.layers .sel input { outline-color: #00009c; border-color: #00009c; outline-offset: -3px; }
.layers em { width: 5px; height: 5px; border: 1px dotted #000; background: #333; }
.layers .drill span { background: #9ab3bd; }
.layers .drill .rout span { background: #d8d8d8; }
.layers .misc span { background: var(--cy); }
.selected { margin: 3px 0 2px; border: 1px solid #000; background: var(--orange); padding-left: 3px; font-size: 12px; }
.board { flex: 1; min-width: 0; width: 100%; height: 889px; }

.vscroll, .hscroll { display: flex; background: #41a890; border: 2px solid; border-color: var(--gr-d) var(--gr-l) var(--gr-l) var(--gr-d); }
.vscroll { flex-direction: column; width: 15px; }
.hscroll { height: 15px; }
.vscroll svg { width: 11px; height: 12px; }
.hscroll svg { width: 12px; height: 11px; }
.track { flex: 1; }
.vscroll .thumb, .hscroll .thumb { background: var(--gr); border: 2px solid; border-color: var(--gr-l) var(--gr-d) var(--gr-d) var(--gr-l); }
.hscroll .thumb { height: 100%; }
.vscroll.cy, .hscroll.cy { background: #84b4b4; border-color: var(--cy-d) var(--cy-l) var(--cy-l) var(--cy-d); }
.cy .track .thumb { background: var(--cy); border-color: var(--cy-l) var(--cy-d) var(--cy-d) var(--cy-l); }

.tools { width: 164px; display: flex; flex-direction: column; border-left: 2px solid var(--gr-d); border-right: 2px solid var(--gr-l); background: #000; }
.grid { display: grid; grid-template-columns: repeat(4, 38px); gap: 2px; padding: 3px 1px 3px 1px; border-bottom: 2px solid #86c8c0; }
.edit { padding-top: 1px; border-bottom: 3px solid #777; }
.grid button { width: 38px; height: 38px; display: grid; place-items: center; background: var(--cy); border: 3px solid; border-color: var(--cy-l) var(--cy-d) var(--cy-d) var(--cy-l); }
.grid button svg { width: 30px; height: 30px; border: 1px solid #000; }
.grid .hot { border: 3px solid #e01818; outline: 1px solid var(--cy-l); outline-offset: -1px; }
.edit button { background: #ccc; border-color: #eee #888 #888 #eee; }
.edit .w svg { background: #fff; }
.edit .o { background: var(--orange); border-color: #ffe6a8 #a8802c #a8802c #ffe6a8; }
.overview { flex: 1; min-height: 0; }
.overview svg { width: 100%; height: 100%; }
.coords { border-top: 2px solid var(--gr-l); background: var(--gr); display: flex; flex-direction: column; height: 46px; padding: 7px 3px; line-height: 15px; border-bottom: 2px solid var(--gr-l); }

.msgbar { display: flex; align-items: stretch; height: 33px; border-top: 1px solid #000; border-bottom: 1px solid #000; background: var(--cream); padding-left: 1px; font-size: 12px; }
.mb { width: 32px; border: 1px solid #000; display: grid; place-items: center; box-shadow: inset 0 0 0 2px var(--cream), inset 0 0 0 4px #b5b38e; }
.mb svg { width: 21px; height: 21px; border: 1px solid #000; }
.mb.teal { width: 30px; box-shadow: inset 0 0 0 3px var(--gr), inset 0 0 0 4px #aaa98a; }
.msgbar > label { display: flex; justify-content: space-between; padding: 0 12px 0 3px; line-height: 31px; border-right: 1px solid var(--gr); width: 48px; }
.xy { width: 172px; display: flex; position: relative; border: 1px solid #000; padding: 2px; margin-right: 2px; }
.xy input { flex: 1; border: 2px solid; border-color: #908e70 #c9c79e #c9c79e #908e70; padding-left: 10px; min-width: 0; }
.xy svg { position: absolute; left: 7px; top: 4px; width: 4px; height: 16px; }
.msgbar p { flex: 1; line-height: 32px; padding-left: 4px; }
.unit { width: 79px; background: var(--gr); border: 1px solid #000; border-left: 2px solid #000; padding: 2px 3px 2px 6px; display: flex; font-size: 15px; }
.opt { display: flex; flex: 1; align-items: center; min-width: 0; padding: 0 5px; background: var(--cy); border: 2px solid; border-color: var(--cy-l) var(--cy-d) var(--cy-d) var(--cy-l); }
.opt i { width: 12px; height: 7px; background: #a9cfcf; border: 2px solid; border-color: var(--cy-l) var(--cy-d) var(--cy-d) var(--cy-l); }
.opt.green-opt, .green-opt i { background: var(--gr); border-color: var(--gr-l) var(--gr-d) var(--gr-d) var(--gr-l); }
.opt.green-opt { padding-left: 2px; }
.status { height: 39px; padding: 3px 4px 9px 2px; background: linear-gradient(var(--cy-d) 3px, var(--cream) 3px); font-size: 12px; text-align: center; }
.status div { height: 27px; line-height: 26px; border: 1px solid #000; background: #b3ffff; box-shadow: inset 0 -2px #b3ffff, inset 0 -4px #5f9494, inset 0 3px #ccffff; }
.marker { position: absolute; left: 3px; top: 967px; width: 7px; height: 59px; border: 1px solid #aaa; border-radius: 3px; background: linear-gradient(#7a7a6acc 70%, #2fc45a 72%, #6fdc8a); }

.taskbar { height: 40px; display: flex; background: #1b2a2e; color: #fff; font: 12px/17px var(--ui); }
.start { width: 48px; display: grid; place-items: center; }
.start svg { width: 16px; height: 16px; }
.start + .start svg { width: 22px; height: 20px; }
.start + .start { width: 55px; }
.tasks { display: flex; gap: 9px; }
.tasks button { width: 152px; display: flex; align-items: center; gap: 6px; padding: 0 6px; border-bottom: 2px solid #76b5e8; white-space: nowrap; overflow: hidden; text-align: left; }
.tasks svg { width: 23px; height: 24px; }
.tasks .active { width: 160px; margin: 0 -4px; padding: 0 10px; background: #48555a; }
.tray { margin-left: auto; display: flex; align-items: center; gap: 9px; padding-right: 19px; margin-right: 5px; border-right: 1px solid #667; }
.lang { font-size: 14px; }
.tray .lang { margin-right: 6px; }
.clock { position: relative; display: flex; flex-direction: column; align-items: center; width: 80px; white-space: nowrap; }
.clock sup { position: absolute; right: 5px; top: 0; width: 10px; height: 10px; line-height: 10px; font-size: 8px; border-radius: 5px; background: #e01010; text-align: center; }
.note { margin-left: 14px; }
.ime { position: absolute; right: 3px; top: 1015px; height: 25px; width: 178px; display: flex; align-items: center; gap: 8px; padding-right: 4px; background: linear-gradient(90deg, transparent 28px, #fff 28px); color: #0b68d0; font: bold 15px/20px var(--ui); }
.ime svg { width: 16px; height: 16px; }
.ime .s { width: 31px; height: 31px; margin-top: -6px; }

.dialog { position: absolute; display: flex; flex-direction: column; background: var(--gr); box-shadow: 0 0 6px #0008; }
.dialog p { white-space: nowrap; }
.dlg-title { display: flex; align-items: center; gap: 6px; height: 31px; padding: 0 0 0 8px; background: #fff; border-bottom: 1px solid #000; }
.dlg-title h2 { flex: 1; font: 12px/18px var(--ui); }
.dlg-title button { width: 31px; height: 24px; display: grid; place-items: center; }
.dim { color: #999; }
.ib, .pic, .close { background: var(--cy); border: 2px solid; border-color: var(--cy-l) var(--cy-d) var(--cy-d) var(--cy-l); box-shadow: 0 0 0 1px #b5dcd8; }
.ib { width: 29px; height: 29px; display: grid; place-items: center; flex: none; }
.ib span { display: flex; flex-direction: column; align-items: center; width: 23px; height: 22px; border: 1px solid #000; font: 11px/12px var(--serif); }
.ib svg { width: 8px; height: 8px; }
.undo { width: 33px; }
.undo span { width: 29px; font-size: 10px; }
.pic { width: 30px; display: grid; place-items: center; flex: none; }
.pic svg { width: 22px; height: 22px; border: 1px solid #000; }
.close { font-size: 15px; text-align: center; }

.hist { left: 151px; top: 12px; width: 467px; }
.hist-top { display: flex; gap: 3px; padding: 4px 6px 2px 4px; }
.modes { width: 102px; height: 288px; display: flex; flex-direction: column; justify-content: space-between; background: var(--cy); border: 1px solid #000; font-weight: bold; }
.modes fieldset { border: 1px solid #000; border-width: 1px 1px 2px; padding-top: 1px; }
.modes label { display: flex; align-items: center; gap: 6px; height: 27px; padding-left: 6px; }
.modes input { width: 11px; height: 11px; border: 2px solid; border-color: var(--cy-l) var(--cy-d) var(--cy-d) var(--cy-l); transform: rotate(45deg); }
.modes input:checked { background: #c8004a; border-color: var(--cy-d) var(--cy-l) var(--cy-l) var(--cy-d); }
.pair { display: flex; gap: 5px; padding: 3px; }
.plot { flex: 1; min-width: 0; margin-top: 1px; border: 2px solid #000; border-width: 2px 1px; background: var(--cy); display: flex; flex-direction: column; font-weight: normal; }
.plot-title { height: 147px; display: flex; align-items: flex-start; justify-content: center; padding: 3px 0 0 8px; }
.plot-title h3 { height: 22px; padding: 2px 2px; font: italic bold 15px/20px var(--mono); background: #b3ffff; border: 1px solid #000; box-shadow: 2px 2px #6b8c8c; margin-right: 6px; }
.counts { display: flex; border-bottom: 4px solid #000; padding: 0 0 0 5px; height: 20px; color: #e01c1c; line-height: 20px; margin-bottom: 1px; }
.counts span { width: 55px; text-align: center; }
.bars { display: flex; margin: 1px 0 6px 5px; height: 29px; width: 331px; border: 1px solid #000; border-left: 0; background: #ff1818; line-height: 15px; }
.bars div { width: 55px; padding: 2px 0 0 9px; border-left: 1px solid #000; }
.bars span { display: block; padding-left: 9px; }
.plot-foot { flex: 1; display: flex; border-top: 1px solid #000; }
.plot-foot ul { width: 92px; padding: 4px 4px 0; border: 2px solid; border-color: var(--cy-d) var(--cy-l) var(--cy-l) var(--cy-d); white-space: nowrap; }
.plot-foot li { height: 18px; line-height: 18px; }
.on { background: #000; color: #7fd0c0; }
.plot-foot .on { height: 15px; line-height: 16px; margin-bottom: 2px; }
.plot-foot .vscroll { margin-left: 3px; }
.res { flex: 1; min-width: 0; margin-left: 1px; border: 2px solid #000; border-left-width: 1px; padding: 1px 3px; display: flex; flex-direction: column; }
.res label { text-align: center; line-height: 18px; }
.res output { padding: 4px 0 1px 11px; }
.res input { width: 100%; height: 15px; background: #84b4b4; border: 2px solid; border-color: var(--cy-d) var(--cy-l) var(--cy-l) var(--cy-d); }
.res input::-webkit-slider-thumb { appearance: none; width: 30px; height: 11px; background: linear-gradient(90deg, transparent 48%, var(--cy-d) 48%, var(--cy-d) 52%, transparent 52%), var(--cy); border: 1px solid; border-color: var(--cy-l) var(--cy-d) var(--cy-d) var(--cy-l); }
.sash { height: 7px; display: flex; align-items: center; justify-content: flex-end; padding-right: 12px; background: linear-gradient(var(--gr) 2px, var(--gr-d) 2px, var(--gr-d) 3px, var(--gr-l) 3px, var(--gr-l) 4px, var(--gr) 4px); }
.sash i { width: 9px; height: 9px; background: var(--gr); border: 1px solid; border-color: var(--gr-l) var(--gr-d) var(--gr-d) var(--gr-l); }
.map { margin: 0 6px 3px 5px; height: 163px; border: 1px solid #000; outline: 1px solid var(--gr-d); display: grid; place-items: center; }
.map svg { width: 170px; height: 122px; }
.hist-foot { display: flex; gap: 5px; padding: 0 6px 3px; }
.hist-foot .ib, .hist-foot .pic { height: 39px; margin-top: 1px; }
.hist-foot p { flex: 1; height: 42px; margin: 0 -1px 0 -2px; padding-left: 2px; line-height: 40px; font-weight: normal; border: 1px solid #000; background: var(--cy); }
.hist-foot .pic { width: 37px; }
.hist-foot .pic svg { width: 30px; height: 30px; }
.hist .close { height: 26px; margin: 1px; font-weight: normal; }

.view { left: 1288px; top: 140px; width: 494px; border-left: 1px solid var(--gr-d); }
.check { height: 26px; margin: 2px; font: bold 15px/18px var(--serif); text-align: center; border: 3px solid; border-color: var(--gr-l) var(--gr-d) var(--gr-d) var(--gr-l); }
.cols { display: flex; border: 2px solid #000; border-width: 2px 0; height: 564px; }
.lcol { width: 171px; display: flex; flex-direction: column; border-right: 2px solid #000; }
.rcol { flex: 1; min-width: 0; display: flex; flex-direction: column; }
.lhead { display: flex; height: 28px; border-bottom: 1px solid #000; font-style: italic; }
.lhead > div { padding: 2px; }
.lhead button { height: 23px; padding: 0 2px; background: var(--cy); font-weight: normal; font-style: italic; border: 2px solid; border-color: var(--cy-l) var(--cy-d) var(--cy-d) var(--cy-l); }
.lhead b { flex: 1; text-align: center; line-height: 28px; background: var(--cy); border: 2px solid #000; border-width: 0 2px; }
.lists { flex: 1; min-height: 0; display: flex; justify-content: space-between; padding-right: 1px; }
.ll, .cats { border: 2px solid; border-color: var(--gr-d) var(--gr-l) var(--gr-l) var(--gr-d); padding: 3px; overflow: hidden; white-space: nowrap; }
.ll { width: 150px; font-weight: normal; }
.ll li { height: 15px; margin-bottom: 3px; line-height: 15px; }
.cats { width: 303px; }
.cats li { height: 18px; overflow: hidden; }
.cats .on { height: 15px; line-height: 15px; margin: 1px 0 2px; }
.lcol .hscroll { width: 150px; margin: 5px 0 3px; height: 14px; }
.replace { display: flex; padding: 1px 2px 2px 6px; height: 32px; border-top: 1px solid #000; font-weight: normal; }
.rhead { display: flex; height: 29px; align-items: stretch; background: var(--cy); }
.rhead button { width: 206px; font-style: italic; border: 2px solid; border-color: var(--cy-l) var(--cy-d) var(--cy-d) var(--cy-l); }
.rhead label { width: 52px; line-height: 28px; text-align: center; }
.rhead .opt { margin-right: 1px; }
.rcol .hscroll { width: 302px; margin: 4px 0 1px; }
.nav { display: flex; align-items: center; gap: 3px; height: 27px; font-weight: normal; }
.nav button { height: 24px; padding: 0 2px; background: var(--cy); border: 2px solid; border-color: var(--cy-l) var(--cy-d) var(--cy-d) var(--cy-l); }
.nav button:first-child { padding: 0 3px; }
.nav button + button { margin-left: 1px; }
.nav .def { outline: 2px solid #000; }
.nav label { padding: 0 1px; }
.idx { flex: 1; min-width: 0; display: flex; position: relative; margin-right: 2px; }
.idx input { flex: 1; min-width: 0; height: 23px; padding: 0 3px 2px; border: 2px solid; border-color: var(--gr-d) var(--gr-l) var(--gr-l) var(--gr-d); }
.idx svg { position: absolute; left: 3px; top: 3px; width: 5px; height: 16px; }
.zoomrow { display: flex; height: 33px; font-weight: normal; }
.boxed { display: flex; width: 125px; padding: 1px 1px 1px 5px; border: 1px solid #000; background: var(--gr); }
.boxed.sv { width: 97px; padding: 0; background: #18e818; border-left: 0; }
.sv label { line-height: 30px; width: 28px; background: var(--cy); }
.opt.lime { margin: 1px 1px 1px 6px; background: #18e818; border-color: #9cf59c #109010 #109010 #9cf59c; }
.lime i { background: #18e818; border-color: #9cf59c #109010 #109010 #9cf59c; }
.showall { display: flex; align-items: center; gap: 4px; padding: 0 0 6px 3px; white-space: nowrap; }
.showall input { width: 13px; height: 13px; border: 1px solid; border-color: var(--gr-l) var(--gr-d) var(--gr-d) var(--gr-l); }
.acts { display: flex; justify-content: flex-end; gap: 5px; height: 34px; padding: 2px 3px 0; }
.info { height: 20px; line-height: 20px; padding-left: 162px; font-weight: normal; }
.erf { height: 22px; line-height: 19px; padding-left: 2px; background: var(--cream); border: 1px solid #000; border-left: 0; border-right: 0; font-weight: normal; }
.vfoot { display: flex; gap: 4px; height: 33px; padding: 1px 1px 2px; background: #b5dcd8; }
.vfoot .close { flex: 1; font-weight: normal; }
.vfoot .hot { background: #b01818; }
.vfoot .hot svg { background: var(--cy); }
.ref span { grid-area: 1 / 1; font: 11px/20px var(--serif); }
.ref svg { grid-area: 1 / 1; }
```
